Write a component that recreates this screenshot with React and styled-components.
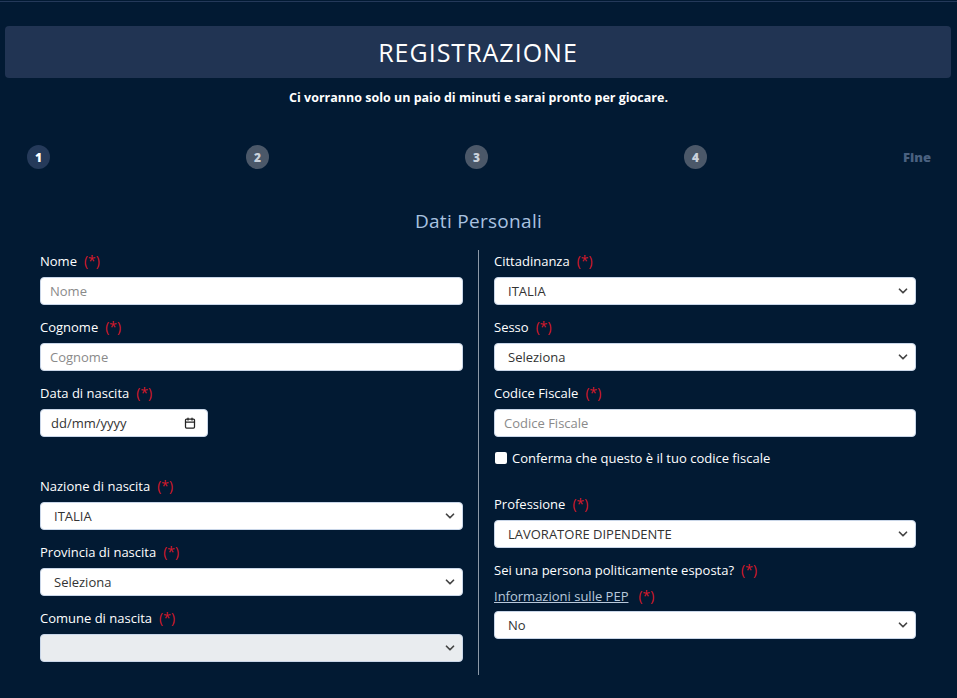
import styled, { createGlobalStyle } from "styled-components";
import { ChevronDown, Calendar } from "lucide-react";

const GlobalStyle = createGlobalStyle`
  body {
    margin: 0;
    background-color: #021a33;
    font-family: "Open Sans", "Liberation Sans", sans-serif;
    color: #fff;
  }
`;

const Page = styled.div`
  min-height: 698px;
  padding-top: 1px;
  box-sizing: border-box;
`;

const TopLine = styled.div`
  height: 1px;
  background-color: #24395a;
`;

const Header = styled.div`
  margin: 24px 6px 0 5px;
  height: 52px;
  border-radius: 4px;
  background-color: #213453;
  display: flex;
  align-items: center;
  justify-content: center;
`;

const Title = styled.h1`
  margin: 0;
  font-size: 25px;
  font-weight: 400;
  letter-spacing: 1px;
`;

const Subtitle = styled.p`
  margin: 12px 0 0;
  text-align: center;
  font-size: 12.5px;
  line-height: 16px;
  font-weight: 700;
`;

const Steps = styled.div`
  margin-top: 39px;
  padding: 0 26px 0 27px;
  display: flex;
  align-items: center;
  gap: 196px;
`;

const StepCircle = styled.span`
  width: 24px;
  height: 24px;
  border-radius: 50%;
  display: flex;
  align-items: center;
  justify-content: center;
  font-size: 12px;
  font-weight: 800;
  background-color: ${(p) => (p.$active ? "#253a5a" : "#4b5869")};
  color: ${(p) => (p.$active ? "#fff" : "#c9d1db")};
`;

const StepEnd = styled.span`
  margin-left: auto;
  font-size: 13px;
  font-weight: 800;
  color: #4a6180;
`;

const SectionTitle = styled.h2`
  margin: 40px 0 0;
  text-align: center;
  font-size: 19px;
  line-height: 24px;
  font-weight: 400;
  letter-spacing: 0.3px;
  color: #a9c2e0;
`;

const Columns = styled.div`
  margin-top: 17px;
  padding: 0 26px 0 25px;
  display: grid;
  grid-template-columns: 1fr 1fr;
`;

const Column = styled.div`
  padding: 1px 15px 13px;
  border-left: ${(p) => (p.$divided ? "1px solid #8c99a8" : "none")};
`;

const Field = styled.div`
  margin-bottom: ${(p) => p.$gap ?? 12}px;
`;

const Label = styled.div`
  font-size: 13px;
  line-height: 20px;
  margin-bottom: ${(p) => p.$gap ?? 6}px;
  display: flex;
  align-items: center;
`;

const Link = styled.a`
  color: #b9c9dc;
  text-decoration: underline;
`;

const Required = styled.span`
  color: #d6192b;
  margin-left: ${(p) => (p.$wide ? 10 : 7)}px;
  font-size: 14px;
`;

const Input = styled.input`
  display: block;
  width: 100%;
  height: 28px;
  box-sizing: border-box;
  border: 1px solid #c9d6e8;
  border-radius: 4px;
  padding: 0 9px;
  font-family: inherit;
  font-size: 13px;
  color: #333;
  background: #fff;
  outline: none;

  &::placeholder {
    color: #8a8a8a;
  }
`;

const SelectWrap = styled.div`
  position: relative;
`;

const Select = styled.select`
  display: block;
  width: 100%;
  height: 28px;
  box-sizing: border-box;
  appearance: none;
  border: 1px solid #c9d6e8;
  border-radius: 4px;
  padding: 0 13px;
  font-family: inherit;
  font-size: 13px;
  color: #333;
  background: ${(p) => (p.disabled ? "#e9ecef" : "#fff")};
  opacity: 1;
  outline: none;
`;

const Chevron = styled(ChevronDown)`
  position: absolute;
  right: 6px;
  top: 7px;
  color: #444;
  pointer-events: none;
`;

const DateBox = styled.div`
  width: 168px;
  height: 28px;
  box-sizing: border-box;
  border: 1px solid #c9d6e8;
  border-radius: 4px;
  background: #fff;
  padding: 0 11px 0 10px;
  display: flex;
  align-items: center;
  justify-content: space-between;
  font-size: 13px;
  color: #333;
`;

const Spacer = styled.div`
  height: ${(p) => p.$h}px;
`;

const CheckRow = styled.label`
  display: flex;
  align-items: center;
  gap: 5px;
  font-size: 13px;
  line-height: 18px;
  margin-bottom: 27px;
`;

const CheckBox = styled.span`
  width: 12px;
  height: 12px;
  margin-left: 1px;
  border-radius: 2px;
  background: #fff;
`;

function Req({ wide }) {
  return <Required $wide={wide}>(*)</Required>;
}

function TextField({ label, placeholder }) {
  return (
    <Field>
      <Label>
        {label}
        <Req />
      </Label>
      <Input placeholder={placeholder} />
    </Field>
  );
}

function SelectField({ label, value, disabled, labelGap, gap }) {
  return (
    <Field $gap={gap}>
      <Label $gap={labelGap}>
        {label}
        <Req />
      </Label>
      <SelectWrap>
        <Select disabled={disabled} defaultValue={value}>
          <option value={value}>{value}</option>
        </Select>
        <Chevron size={14} strokeWidth={3} />
      </SelectWrap>
    </Field>
  );
}

export default function App() {
  return (
    <Page>
      <GlobalStyle />
      <TopLine />
      <Header>
        <Title>REGISTRAZIONE</Title>
      </Header>
      <Subtitle>Ci vorranno solo un paio di minuti e sarai pronto per giocare.</Subtitle>

      <Steps>
        <StepCircle $active>1</StepCircle>
        <StepCircle>2</StepCircle>
        <StepCircle>3</StepCircle>
        <StepCircle>4</StepCircle>
        <StepEnd>Fine</StepEnd>
      </Steps>

      <SectionTitle>Dati Personali</SectionTitle>

      <Columns>
        <Column>
          <TextField label="Nome" placeholder="Nome" />
          <TextField label="Cognome" placeholder="Cognome" />
          <Field>
            <Label>
              Data di nascita
              <Req />
            </Label>
            <DateBox>
              <span>dd/mm/yyyy</span>
              <Calendar size={12} strokeWidth={2.5} color="#222" />
            </DateBox>
          </Field>
          <Spacer $h={27} />
          <SelectField label="Nazione di nascita" value="ITALIA" />
          <SelectField label="Provincia di nascita" value="Seleziona" />
          <SelectField label="Comune di nascita" value="" disabled gap={0} />
        </Column>

        <Column $divided>
          <SelectField label="Cittadinanza" value="ITALIA" />
          <SelectField label="Sesso" value="Seleziona" />
          <TextField label="Codice Fiscale" placeholder="Codice Fiscale" />
          <CheckRow>
            <CheckBox />
            Conferma che questo è il tuo codice fiscale
          </CheckRow>
          <SelectField label="Professione" value="LAVORATORE DIPENDENTE" />
          <Label $gap={6}>
            Sei una persona politicamente esposta?
            <Req />
          </Label>
          <Field $gap={0}>
            <Label $gap={5}>
              <Link>Informazioni sulle PEP</Link>
              <Req wide />
            </Label>
            <SelectWrap>
              <Select defaultValue="No">
                <option value="No">No</option>
              </Select>
              <Chevron size={14} strokeWidth={3} />
            </SelectWrap>
          </Field>
        </Column>
      </Columns>
    </Page>
  );
}
